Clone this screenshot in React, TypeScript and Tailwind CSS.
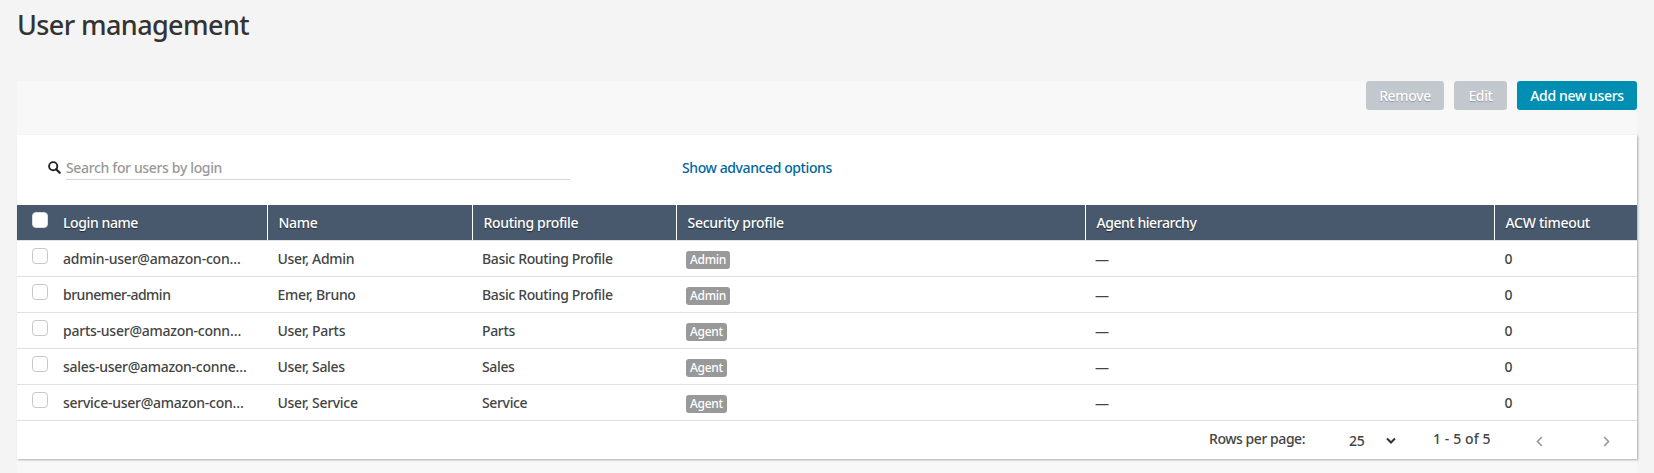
import React from "react";

type User = { login: string; name: string; routing: string; security: string; tracking: string };

const users: User[] = [
  { login: "admin-user@amazon-con…", name: "User, Admin", routing: "Basic Routing Profile", security: "Admin", tracking: "tracking-[-0.22px]" },
  { login: "brunemer-admin", name: "Emer, Bruno", routing: "Basic Routing Profile", security: "Admin", tracking: "tracking-[-0.5px]" },
  { login: "parts-user@amazon-conn…", name: "User, Parts", routing: "Parts", security: "Agent", tracking: "tracking-[-0.24px]" },
  { login: "sales-user@amazon-conne…", name: "User, Sales", routing: "Sales", security: "Agent", tracking: "tracking-[-0.28px]" },
  { login: "service-user@amazon-con…", name: "User, Service", routing: "Service", security: "Agent", tracking: "tracking-[-0.26px]" },
];

const columns = "grid grid-cols-[251px_205px_204px_409px_409px_142px]";
const textShadow = "[text-shadow:0_1px_1px_rgba(0,0,0,0.5)]";

function Checkbox({ header = false }: { header?: boolean }) {
  return (
    <span
      className={`block size-4 shrink-0 rounded-[4px] border bg-white ${header ? "border-[#dcdcdc]" : "border-[#c8c8c8]"}`}
    />
  );
}

function HeaderCell({ children, last = false }: { children: React.ReactNode; last?: boolean }) {
  return (
    <div className={`flex items-center pl-[10.5px] ${last ? "" : "border-r border-white"}`}>{children}</div>
  );
}

export default function App() {
  return (
    <div className="h-[473px] w-[1654px] overflow-hidden bg-[#f4f4f4] px-[17px] font-['Noto_Sans',sans-serif] text-[14px] leading-5 font-medium tracking-[-0.3px] text-[#444]">
      <h1 className="h-[81px] pt-[5px] text-[27px] leading-10 font-medium tracking-[-0.6px] text-[#333]">
        User management
      </h1>
      <main className="h-[392px] bg-[#f8f8f8]">
        <div className={`flex h-[54px] items-start justify-end gap-[10px] tracking-[-0.35px] text-white ${textShadow}`}>
          <button className="h-[29px] w-[78px] rounded-[3px] bg-[#c3c8cf] [text-shadow:0_1px_1px_rgba(0,0,0,0.25)]">Remove</button>
          <button className="h-[29px] w-[53px] rounded-[3px] bg-[#c3c8cf] [text-shadow:0_1px_1px_rgba(0,0,0,0.25)]">Edit</button>
          <button className="h-[29px] w-[120px] rounded-[3px] bg-[#008fb2]">Add new users</button>
        </div>
        <section className="h-[324px] bg-white shadow-[1px_1px_2px_rgba(0,0,0,0.3)]">
          <div className="flex h-[70px] items-start pl-[31px]">
            <svg className="mt-[26px] size-[13px] shrink-0" viewBox="0 0 13 13" fill="none" stroke="#222">
              <circle cx="5.2" cy="5.2" r="4.1" strokeWidth="1.9" />
              <path d="M8.2 8.2 11.7 11.7" strokeWidth="2.3" strokeLinecap="round" />
            </svg>
            <div className="mt-[23px] ml-[5px] h-[22px] w-[504px] border-b border-[#d5d5d5] tracking-[-0.35px] text-[#999]">
              Search for users by login
            </div>
            <a className="mt-[23px] ml-[112px] tracking-[-0.4px] text-[#0067a0]">Show advanced options</a>
          </div>
          <div className={`${columns} h-[35px] bg-[#48596d] text-white ${textShadow}`}>
            <div className="flex items-start border-r border-white pl-[15px]">
              <span className="pt-[7px]"><Checkbox header /></span>
              <span className="pt-[8px] pl-[15px] tracking-[-0.4px]">Login name</span>
            </div>
            <HeaderCell>Name</HeaderCell>
            <HeaderCell><span className="tracking-[-0.35px]">Routing profile</span></HeaderCell>
            <HeaderCell>Security profile</HeaderCell>
            <HeaderCell><span className="tracking-[-0.45px]">Agent hierarchy</span></HeaderCell>
            <HeaderCell last>ACW timeout</HeaderCell>
          </div>
          {users.map((u) => (
            <div key={u.login} className={`${columns} h-9 items-start border-t border-[#e1e1e1]`}>
              <div className="flex items-start pl-[15px]">
                <span className="pt-[7px]"><Checkbox /></span>
                <span className={`pt-[8px] pl-[15px] whitespace-nowrap ${u.tracking}`}>{u.login}</span>
              </div>
              <span className="pt-[8px] pl-[9.5px]">{u.name}</span>
              <span className="pt-[8px] pl-[9px] tracking-[-0.35px]">{u.routing}</span>
              <div className="flex pt-[10px] pl-[9px]">
                <span className="h-[18px] rounded-[3px] bg-[#999] px-[4px] text-[12px] leading-[18px] text-white">{u.security}</span>
              </div>
              <span className="pt-[8px] pl-[9px] font-semibold">—</span>
              <span className="pt-[8px] pl-[9.5px]">0</span>
            </div>
          ))}
          <div className="flex h-[39px] items-start border-t border-[#e1e1e1] pl-[1192px]">
            <span className="mt-[8px] w-[140px] tracking-[-0.45px]">Rows per page:</span>
            <span className="mt-[10px] w-[37px]">25</span>
            <svg className="mt-[15px] size-[10px]" viewBox="0 0 10 10" fill="none" stroke="#333" strokeWidth="2">
              <path d="M1 2.5 5 6.5 9 2.5" />
            </svg>
            <span className="mt-[8px] ml-[37px] w-[103px] tracking-[0.1px]">1 - 5 of 5</span>
            <svg className="mt-[15px] h-[11px] w-[7px]" viewBox="0 0 7 11" fill="none" stroke="#999" strokeWidth="1.7">
              <path d="M5.8 1 1.5 5.5 5.8 10" />
            </svg>
            <svg className="mt-[15px] ml-[60px] h-[11px] w-[7px]" viewBox="0 0 7 11" fill="none" stroke="#999" strokeWidth="1.7">
              <path d="M1.2 1 5.5 5.5 1.2 10" />
            </svg>
          </div>
        </section>
      </main>
    </div>
  );
}
